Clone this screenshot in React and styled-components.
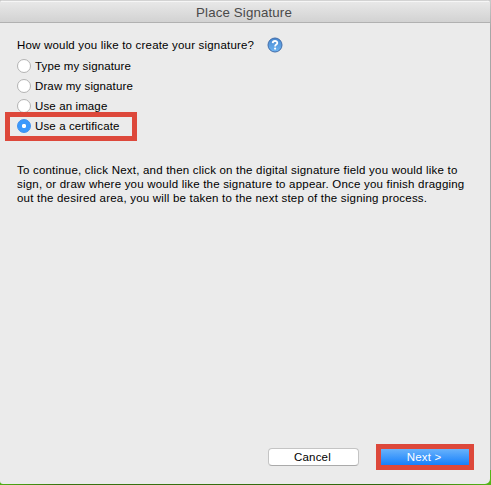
import React, { useState } from "react";
import styled, { createGlobalStyle } from "styled-components";

const GlobalStyle = createGlobalStyle`
    * {
        box-sizing: border-box;
    }

    body {
        margin: 0;
        height: 485px;
        overflow: hidden;
        background: linear-gradient(#c9c9c9 0, #a6a6a6 30px 470px, transparent 470px),
            linear-gradient(90deg, #4fae12 0, #39730f 60px, #2f680c 80%, #55b516 100%);
        font-family: "Liberation Sans", Arial, sans-serif;
    }
`;

const Window = styled.div`
    width: 490px;
    height: 484px;
    display: flex;
    flex-direction: column;
    background: #ebebeb;
    border-radius: 4px 4px 5px 3px;
    overflow: hidden;
`;

const TitleBar = styled.header`
    height: 23px;
    flex: none;
    display: flex;
    align-items: center;
    justify-content: center;
    padding: 2px 2px 0 0;
    background: linear-gradient(#e9e9e9, #d2d2d2);
    border-top: 1px solid #d3d3d3;
    border-bottom: 1px solid #b1b1b1;
    box-shadow: inset 0 1px 0 #f6f6f6;
    color: #4a4a4a;
    font-size: 13.3px;
    line-height: 16px;
    letter-spacing: 0.13px;
`;

const Content = styled.main`
    flex: 1;
    display: flex;
    flex-direction: column;
    padding: 14px 17px 0 17px;
    color: #000;
    font-size: 11.5px;
`;

const Question = styled.div`
    height: 16px;
    display: flex;
    align-items: center;
    gap: 12.4px;
    letter-spacing: 0.19px;
    white-space: nowrap;

    svg {
        flex: none;
    }
`;

const Options = styled.div`
    display: flex;
    flex-direction: column;
    margin-top: 3px;
`;

const Option = styled.label`
    position: relative;
    height: 20px;
    display: flex;
    align-items: center;
    gap: 4px;
    letter-spacing: 0.12px;
`;

const Radio = styled.input`
    appearance: none;
    width: 14px;
    height: 14px;
    margin: 0;
    border-radius: 50%;
    border: 1px solid #b3b3b3;
    background: #fff;

    &:checked {
        border-color: #3c8ff0;
        background: radial-gradient(circle, #fff 0 1.8px, #3b99fc 2.5px);
    }
`;

const Highlight = styled.span`
    position: absolute;
    top: -4px;
    left: -12px;
    width: 132px;
    height: 29px;
    border: 5px solid #dd483b;
    pointer-events: none;
`;

const Description = styled.p`
    margin: 27px 0 0;
    line-height: 14px;
    letter-spacing: 0.205px;
    white-space: nowrap;
`;

const Footer = styled.footer`
    display: flex;
    justify-content: flex-end;
    align-items: center;
    gap: 17px;
    padding: 0 16px 14px 0;
`;

const Button = styled.button`
    height: 18px;
    width: 91px;
    padding: 0 2px 0 0;
    background: #fff;
    border: 1px solid #c4c4c4;
    border-bottom-color: #aaa;
    border-radius: 4px;
    color: #000;
    font: 11.5px/16px "Liberation Sans", Arial, sans-serif;
    letter-spacing: 0.17px;
`;

const NextButton = styled(Button)`
    width: 98px;
    height: 26px;
    background: linear-gradient(#68b2fb, #1680fc) padding-box;
    border: 5px solid #dd483b;
    border-radius: 0;
    color: #fff;
`;

const choices = ["Type my signature", "Draw my signature", "Use an image", "Use a certificate"];

function HelpIcon() {
    return (
        <svg width="16" height="16" viewBox="0 0 16 16">
            <defs>
                <linearGradient id="help" x1="0" y1="0" x2="0" y2="1">
                    <stop offset="0" stopColor="#4686cf" />
                    <stop offset="1" stopColor="#6fb5f2" />
                </linearGradient>
            </defs>
            <circle cx="8" cy="8" r="7" fill="url(#help)" stroke="#426ca8" />
            <path d="M5.7 6.1C5.8 3.3 10.3 3.3 10.3 6C10.3 7.7 8.1 7.5 8.1 9.5" fill="none" stroke="#fff" strokeWidth="1.8" />
            <circle cx="8.1" cy="11.6" r="1.1" fill="#fff" />
        </svg>
    );
}

function App() {
    const [selected, setSelected] = useState("Use a certificate");

    return (
        <>
            <GlobalStyle />
            <Window>
                <TitleBar>Place Signature</TitleBar>
                <Content>
                    <Question>
                        <span>How would you like to create your signature?</span>
                        <HelpIcon />
                    </Question>
                    <Options>
                        {choices.map((choice) => (
                            <Option key={choice}>
                                <Radio
                                    type="radio"
                                    name="signature"
                                    checked={selected === choice}
                                    onChange={() => setSelected(choice)}
                                />
                                <span>{choice}</span>
                                {selected === choice && <Highlight />}
                            </Option>
                        ))}
                    </Options>
                    <Description>
                        To continue, click Next, and then click on the digital signature field you would like to
                        <br />
                        sign, or draw where you would like the signature to appear. Once you finish dragging
                        <br />
                        out the desired area, you will be taken to the next step of the signing process.
                    </Description>
                </Content>
                <Footer>
                    <Button>Cancel</Button>
                    <NextButton>Next &gt;</NextButton>
                </Footer>
            </Window>
        </>
    );
}

export default App;
